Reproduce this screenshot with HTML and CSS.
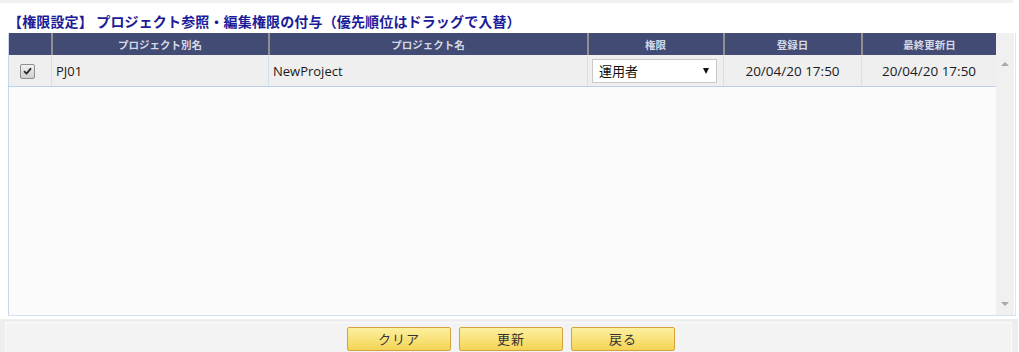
FILE: index.html
```html
<!DOCTYPE html>
<html lang="ja">
<head>
<meta charset="utf-8">
<title>権限設定</title>
<link rel="stylesheet" href="styles.css">
</head>
<body>
<div class="topbar"></div>
<h1 class="title">【権限設定】 プロジェクト参照・編集権限の付与（優先順位はドラッグで入替）</h1>
<div class="grid">
  <div class="grid-main">
    <table class="tbl">
      <colgroup>
        <col class="c1"><col class="c2"><col class="c3"><col class="c4"><col class="c5"><col class="c6">
      </colgroup>
      <thead>
        <tr>
          <th></th>
          <th>プロジェクト別名</th>
          <th>プロジェクト名</th>
          <th>権限</th>
          <th>登録日</th>
          <th>最終更新日</th>
        </tr>
      </thead>
      <tbody>
        <tr>
          <td class="cb-cell">
            <span class="cb"><svg viewBox="0 0 14 14" width="14" height="14"><path d="M3.2 7.2 L5.8 9.8 L10.8 3.6" fill="none" stroke="#2c2c2c" stroke-width="2.4" stroke-linecap="round" stroke-linejoin="round"/></svg></span>
          </td>
          <td>PJ01</td>
          <td>NewProject</td>
          <td class="sel-cell">
            <div class="select"><span>運用者</span><span class="arrow"></span></div>
          </td>
          <td class="center">20/04/20 17:50</td>
          <td class="center">20/04/20 17:50</td>
        </tr>
      </tbody>
    </table>
  </div>
  <div class="scrollbar">
    <span class="up"></span>
    <span class="down"></span>
  </div>
</div>
<div class="footer">
  <div class="footer-inner">
    <button class="btn">クリア</button>
    <button class="btn">更新</button>
    <button class="btn">戻る</button>
  </div>
</div>
</body>
</html>
```
FILE: styles.css
```css
html, body {
  margin: 0;
  padding: 0;
  background: #ffffff;
  font-family: "Open Sans", "Noto Sans CJK JP", sans-serif;
  color: #222;
  width: 1019px;
  height: 352px;
  overflow: hidden;
}

.topbar {
  height: 3px;
  width: 1013px;
  background: #f1f1f1;
}

.title {
  margin: 8px 0 2px 8px;
  height: 20px;
  line-height: 20px;
  font-size: 14px;
  letter-spacing: 0.15px;
  font-weight: bold;
  color: #1c1c98;
  font-family: "Noto Sans CJK JP", sans-serif;
  white-space: nowrap;
}

.grid {
  margin-left: 8px;
  width: 1007px;
  height: 282px;
  display: flex;
  border-bottom: 1px solid #d3e1f3;
  border-right: 1px solid #dbe7f5;
}

.grid-main {
  width: 988px;
  border-left: 1px solid #c5d8f0;
  background: #fbfbfb;
  box-sizing: border-box;
}

.tbl {
  width: 988px;
  margin-left: -1px;
  border-collapse: collapse;
  table-layout: fixed;
}

.c1 { width: 43px; }
.c2 { width: 217px; }
.c3 { width: 319px; }
.c4 { width: 136px; }
.c5 { width: 138px; }
.c6 { width: 135px; }

.tbl th {
  height: 22px;
  padding: 0;
  background: #414b73;
  color: #d5d9e7;
  font-family: "Noto Sans CJK JP", sans-serif;
  font-size: 10.5px;
  font-weight: bold;
  text-align: center;
  border-left: 2px solid #8f8f8f;
}

.tbl th:first-child {
  border-left: none;
}

.tbl td {
  height: 31px;
  padding: 0 0 0 4px;
  background: #efefef;
  font-size: 13px;
  color: #1a1a1a;
  border-bottom: 1px solid #b9d0ee;
  border-left: 1px solid #d3e1f3;
  white-space: nowrap;
}

.tbl td:first-child {
  border-left: 1px solid #c5d8f0;
}

.tbl td:last-child {
  border-right: 1px solid #b9d0ee;
}

.tbl td.center {
  text-align: center;
  padding: 0;
  font-size: 13.5px;
}

.tbl td.cb-cell {
  padding-left: 11px;
}

.cb {
  display: inline-flex;
  width: 13px;
  height: 13px;
  border: 1px solid #8e8e8e;
  border-radius: 2px;
  background: linear-gradient(#f2f2f2, #cfcfcf);
  align-items: center;
  justify-content: center;
  vertical-align: middle;
  margin-top: -2px;
}

.cb svg {
  width: 11px;
  height: 11px;
}

.tbl td.sel-cell {
  padding-left: 4px;
}

.select {
  border: 1px solid #c8c8c8;
  background: #ffffff;
  display: flex;
  align-items: center;
  justify-content: space-between;
  padding: 0 7px 0 6px;
  box-sizing: border-box;
  width: 125px;
  height: 24px;
  font-family: "Noto Sans CJK JP", sans-serif;
  font-size: 13px;
  color: #111;
}

.arrow {
  width: 0;
  height: 0;
  border-left: 3.5px solid transparent;
  border-right: 3.5px solid transparent;
  border-top: 6px solid #111;
}

.scrollbar {
  width: 18px;
  background: #f0f0f0;
  display: flex;
  flex-direction: column;
  align-items: center;
  justify-content: space-between;
  padding: 29px 0 9px 0;
  box-sizing: border-box;
}

.scrollbar .up {
  width: 0;
  height: 0;
  border-left: 4px solid transparent;
  border-right: 4px solid transparent;
  border-bottom: 4px solid #a8a8a8;
}

.scrollbar .down {
  width: 0;
  height: 0;
  border-left: 4px solid transparent;
  border-right: 4px solid transparent;
  border-top: 4px solid #a8a8a8;
}

.footer {
  margin-top: 3px;
  width: 1018px;
  height: 33px;
  background: #eeeeee;
  padding: 3px 6px 0 5px;
  box-sizing: border-box;
}

.footer-inner {
  height: 100%;
  border: 1px solid #fbfbfb;
  border-bottom: none;
  background: #f3f3f3;
  display: flex;
  justify-content: center;
  gap: 8px;
  padding-top: 4px;
  padding-left: 5px;
  box-sizing: border-box;
}

.btn {
  width: 104px;
  height: 24px;
  border: 1px solid #d6a23e;
  border-radius: 2px;
  background: linear-gradient(#fcf0a0, #f4d455);
  font-family: "Noto Sans CJK JP", sans-serif;
  font-size: 13px;
  letter-spacing: 1px;
  color: #333;
  padding: 0;
  margin: 0;
  box-sizing: border-box;
  line-height: 22px;
}
```
